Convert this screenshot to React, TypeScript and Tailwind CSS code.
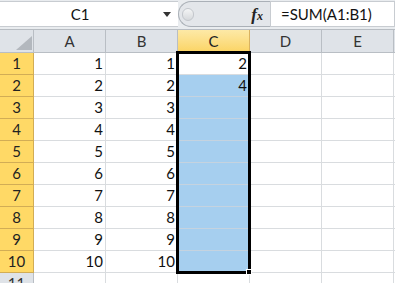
import React from "react";

const columns = ["A", "B", "C", "D", "E"];

const values: Record<number, (string | null)[]> = {};
for (let r = 1; r <= 10; r++) {
  values[r] = [String(r), String(r), r === 1 ? "2" : r === 2 ? "4" : null, null, null];
}

function FormulaBar() {
  return (
    <div className="flex h-[30px] border-b border-[#b7bcc2] bg-[#e9ecef] pt-[1px]">
      <div className="relative flex h-[26px] w-[178px] items-center border-y border-[#c8ccd1] bg-white">
        <span className="w-[160px] text-center text-[15px] text-[#111]">C1</span>
        <svg className="absolute left-[163px] top-[10px]" width="8" height="5" viewBox="0 0 8 5">
          <path d="M0 0 L8 0 L4 5 Z" fill="#333" />
        </svg>
      </div>
      <div className="flex h-[26px] w-[92px] items-center rounded-l-[13px] border border-r-0 border-[#aab0b7] bg-[#e3e6ea] pl-[3px]">
        <div className="h-[13px] w-[12px] rounded-full border border-[#c3c7cc] bg-gradient-to-b from-[#f4f5f6] to-[#d6d9dc]" />
        <span
          className="ml-auto mr-[7px] text-[17px] font-bold italic leading-none text-[#222]"
          style={{ fontFamily: '"Liberation Serif", serif' }}
        >
          f<span className="text-[12px]">x</span>
        </span>
      </div>
      <div className="flex h-[26px] flex-1 items-center border border-[#c8ccd1] bg-white pl-[10px] text-[15px] text-[#111]">
        =SUM(A1:B1)
      </div>
    </div>
  );
}

function HeaderRow() {
  return (
    <div className="flex h-[23px]">
      <div className="relative w-[34px] shrink-0 border-r border-b border-[#b9bec4] bg-[#dfe3e8]">
        <svg className="absolute left-[16px] top-[6px]" width="16" height="14" viewBox="0 0 16 14">
          <path d="M16 0 L16 14 L0 14 Z" fill="#b3b8be" />
        </svg>
      </div>
      {columns.map((c) => (
        <div
          key={c}
          className={
            c === "C"
              ? "flex w-[72px] shrink-0 items-center justify-center border-r border-b border-b-[#e3a83b] border-r-[#d9b260] bg-gradient-to-b from-[#fde9a6] to-[#fbd463] text-[15px] text-[#222]"
              : "flex w-[72px] shrink-0 items-center justify-center border-r border-b border-[#b9bec4] bg-[#dfe3e8] text-[15px] text-[#333]"
          }
        >
          {c}
        </div>
      ))}
      <div className="flex-1 border-b border-[#b9bec4] bg-[#dfe3e8]" />
    </div>
  );
}

function DataRow({ n }: { n: number }) {
  const vals = values[n];
  return (
    <div className="flex h-[22px]">
      <div className="flex w-[34px] shrink-0 items-center justify-center border-r border-b border-[#d2ad55] bg-[#ffd966] text-[15px] text-[#222]">
        {n}
      </div>
      {vals.map((v, i) => (
        <div
          key={i}
          className={
            i === 2 && n > 1
              ? "flex w-[72px] shrink-0 items-center justify-end border-r border-b border-[#c5d3df] bg-[#a6cfef] pr-[2px] text-[15px] text-[#111]"
              : "flex w-[72px] shrink-0 items-center justify-end border-r border-b border-[#d9dcdf] bg-white pr-[2px] text-[15px] text-[#111]"
          }
        >
          {v}
        </div>
      ))}
      <div className="flex-1 border-b border-[#d9dcdf]" />
    </div>
  );
}

function EmptyRow({ n }: { n: number }) {
  return (
    <div className="flex h-[22px]">
      <div className="flex w-[34px] shrink-0 items-center justify-center border-r border-b border-[#b9bec4] bg-[#dfe3e8] text-[15px] text-[#333]">
        {n}
      </div>
      {columns.map((c) => (
        <div key={c} className="w-[72px] shrink-0 border-r border-b border-[#d9dcdf] bg-white" />
      ))}
    </div>
  );
}

export default function App() {
  return (
    <div
      className="relative h-[283px] w-[395px] overflow-hidden bg-white"
      style={{ fontFamily: 'Lato, "Liberation Sans", sans-serif' }}
    >
      <FormulaBar />
      <HeaderRow />
      {Array.from({ length: 10 }).map((_, i) => (
        <DataRow key={i} n={i + 1} />
      ))}
      <EmptyRow n={11} />
      {/* selection outline over C1:C10 */}
      <div className="pointer-events-none absolute left-[176px] top-[51px] h-[223px] w-[75px] border-[3px] border-black" />
      <div className="pointer-events-none absolute left-[246px] top-[269px] h-[6px] w-[6px] border border-white bg-black" />
    </div>
  );
}
